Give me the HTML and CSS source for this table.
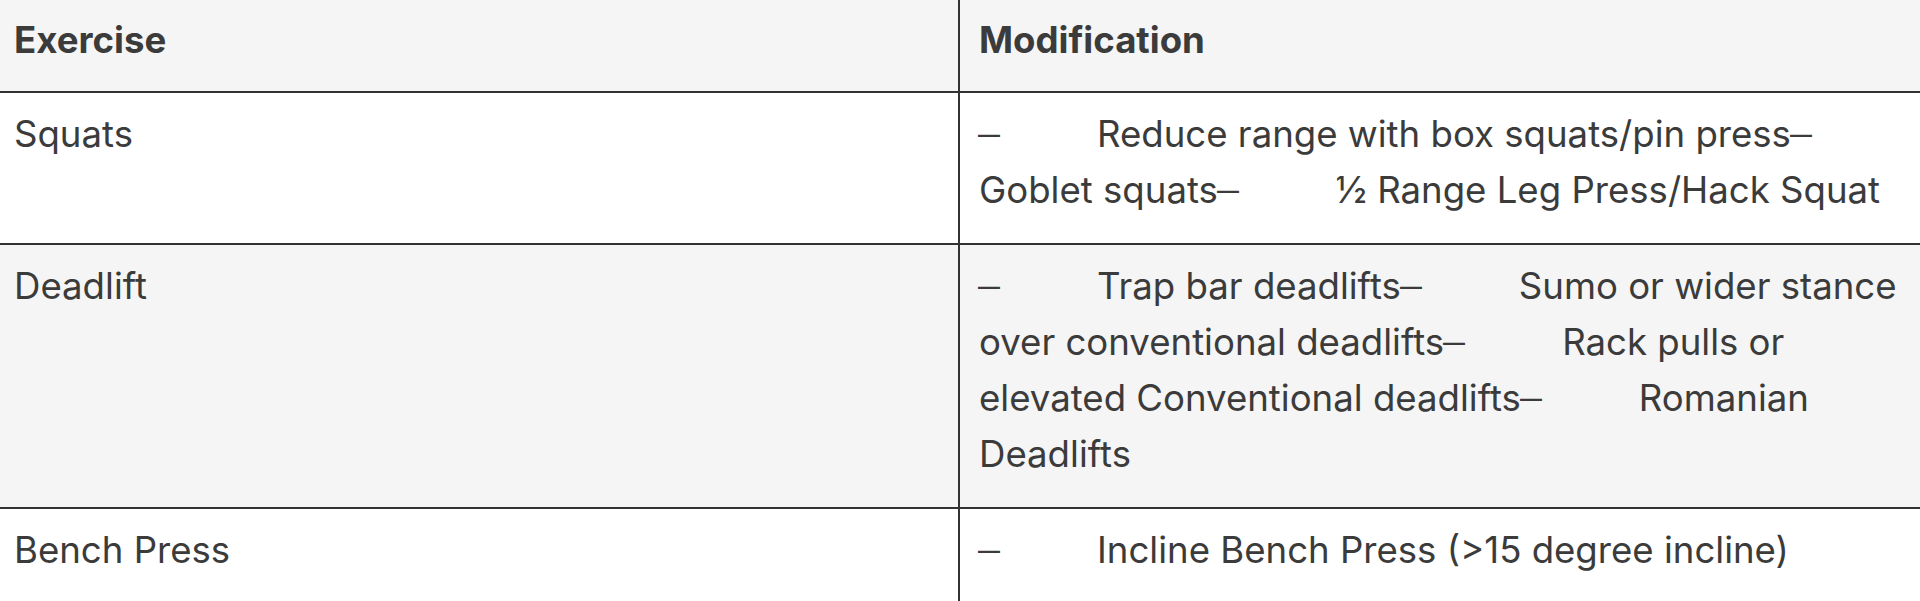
FILE: index.html
```html
<!DOCTYPE html>
<html lang="en">
<head>
<meta charset="utf-8">
<title>Exercise modifications</title>
<link rel="stylesheet" href="styles.css">
</head>
<body>
<div class="table" role="table">
  <div class="cell head c1" role="columnheader">Exercise</div>
  <div class="cell head c2" role="columnheader">Modification</div>

  <div class="cell c1" role="cell">Squats</div>
  <div class="cell c2" role="cell"><span class="dash">–</span><span class="gap"></span>Reduce range with box squats/pin press<span class="dash">–</span><br>Goblet squats<span class="dash">–</span><span class="gap"></span>½ Range Leg Press/Hack Squat</div>

  <div class="cell alt c1" role="cell">Deadlift</div>
  <div class="cell alt c2" role="cell"><span class="dash">–</span><span class="gap"></span>Trap bar deadlifts<span class="dash">–</span><span class="gap"></span>Sumo or wider stance<br>over conventional deadlifts<span class="dash">–</span><span class="gap"></span>Rack pulls or<br>elevated Conventional deadlifts<span class="dash">–</span><span class="gap"></span>Romanian<br>Deadlifts</div>

  <div class="cell c1" role="cell">Bench Press</div>
  <div class="cell c2" role="cell"><span class="dash">–</span><span class="gap"></span>Incline Bench Press (&gt;15 degree incline)</div>
</div>
</body>
</html>
```
FILE: styles.css
```css
html, body {
  margin: 0;
  padding: 0;
  background: #ffffff;
}

body {
  font-family: Inter, "Liberation Sans", sans-serif;
  font-size: 36.6px;
  line-height: 56px;
  color: #3b3b3b;
  overflow: hidden;
}

.table {
  display: grid;
  grid-template-columns: 958px 962px;
  width: 1920px;
}

.cell {
  padding: 13px 0 25px 14px;
  border-bottom: 2px solid #333333;
  background: #ffffff;
  white-space: nowrap;
}

.c2 {
  border-left: 2px solid #333333;
  padding-left: 19px;
}

.head {
  background: #f5f5f5;
  font-weight: 700;
  padding-top: 12px;
  padding-bottom: 23px;
}

.alt {
  background: #f5f5f5;
}

.dash {
  display: inline-block;
  width: 20px;
  text-align: center;
  transform: scaleX(1.2);
  font-weight: 300;
}

.gap {
  display: inline-block;
  width: 98px;
}
```
